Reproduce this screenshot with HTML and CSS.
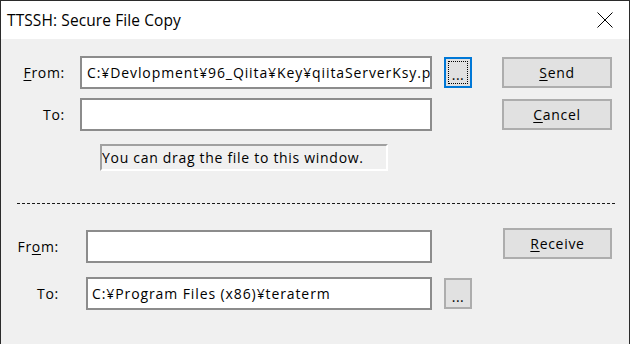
FILE: index.html
```html
<!DOCTYPE html>
<html lang="en">
<head>
    <meta charset="UTF-8">
    <meta name="viewport" content="width=device-width, initial-scale=1.0">
    <title>TTSSH: Secure File Copy</title>
    <link rel="stylesheet" href="styles.css">
</head>
<body>
    <div class="window">
        <div class="titlebar">
            <span class="title">TTSSH: Secure File Copy</span>
            <svg class="close" width="16" height="16" viewBox="0 0 16 16">
                <path d="M0.5 0.5 L15.5 15.5 M15.5 0.5 L0.5 15.5" stroke="#000" stroke-width="1" fill="none"/>
            </svg>
        </div>

        <div class="content">
            <div class="send-grid">
                <label class="label"><u>F</u>rom:</label>
                <div class="field">C:¥Devlopment¥96_Qiita¥Key¥qiitaServerKsy.pub</div>
                <button class="browse focused"><span class="focus-rect">...</span></button>
                <button class="btn"><u>S</u>end</button>

                <label class="label">To:</label>
                <div class="field"></div>
                <div></div>
                <button class="btn"><u>C</u>ancel</button>

                <div></div>
                <div class="hint">You can drag the file to this window.</div>
            </div>

            <div class="separator"></div>

            <div class="recv-grid">
                <label class="label">Fr<u>o</u>m:</label>
                <div class="field wide"></div>
                <div></div>
                <button class="btn receive"><u>R</u>eceive</button>

                <label class="label">To:</label>
                <div class="field wide">C:¥Program Files (x86)¥teraterm</div>
                <button class="browse">...</button>
                <div></div>
            </div>
        </div>
    </div>
</body>
</html>
```

FILE: styles.css
```css
:root {
    --face-color: #f0f0f0;
    --button-color: #e1e1e1;
    --button-border: #adadad;
    --field-border: #8c8c8c;
    --focus-color: #0078d7;
}

body {
    margin: 0;
    font-family: "Open Sans", "Noto Sans", sans-serif;
    font-size: 14px;
    letter-spacing: 0.7px;
    color: #000;
    background: #fff;
}

.window {
    width: 630px;
    height: 344px;
    box-sizing: border-box;
    border: 1px solid #2b2b2b;
    border-bottom: none;
    background: var(--face-color);
    overflow: hidden;
}

.titlebar {
    height: 38px;
    background: #fff;
    display: flex;
    align-items: center;
    justify-content: space-between;
    padding: 0 16px 0 6px;
}

.title {
    font-size: 15.5px;
    letter-spacing: 0.1px;
}

.close {
    display: block;
}

.content {
    padding-top: 17px;
}

.send-grid {
    display: grid;
    grid-template-columns: 79px 364px 58px 110px;
    grid-template-rows: 33px 33px auto;
    row-gap: 9px;
    align-items: center;
}

.recv-grid {
    display: grid;
    grid-template-columns: 85px 358px 58px 110px;
    grid-template-rows: 33px 33px;
    row-gap: 14px;
    align-items: center;
    margin-top: 26px;
}

.label {
    text-align: right;
    padding-right: 15px;
}

.recv-grid .label {
    padding-right: 27px;
}

u {
    text-underline-offset: 2px;
}

.field {
    width: 352px;
    height: 33px;
    box-sizing: border-box;
    border: 2px solid var(--field-border);
    background: #fff;
    padding: 0 0 0 5px;
    line-height: 29px;
    letter-spacing: 0.9px;
    white-space: nowrap;
    overflow: hidden;
}

.field.wide {
    width: 346px;
    padding-left: 4px;
}

.btn,
.browse {
    font: inherit;
    letter-spacing: inherit;
    color: #000;
    background: var(--button-color);
    border: 2px solid var(--button-border);
    padding: 0;
    height: 31px;
    justify-self: start;
}

.btn {
    width: 110px;
}

.receive {
    align-self: start;
    margin-top: -2px;
    margin-left: 1px;
    width: 109px;
}

.browse {
    width: 28px;
    padding-top: 6px;
    line-height: 20px;
    letter-spacing: 0.5px;
}

.browse.focused {
    border-color: var(--focus-color);
    padding: 2px;
}

.focus-rect {
    display: block;
    height: 100%;
    box-sizing: border-box;
    border: 1px dotted #000;
    padding-top: 3px;
    line-height: 20px;
}

.hint {
    grid-column: 2;
    margin: 4px 0 0 20px;
    width: 288px;
    height: 27px;
    box-sizing: border-box;
    border: 2px solid;
    border-color: #a0a0a0 #fff #fff #a0a0a0;
    line-height: 23px;
    white-space: nowrap;
    overflow: hidden;
}

.separator {
    height: 1px;
    margin: 32px 13px 0 16px;
    background: repeating-linear-gradient(90deg, #1a1a1a 0 3px, transparent 3px 5px);
}
```
